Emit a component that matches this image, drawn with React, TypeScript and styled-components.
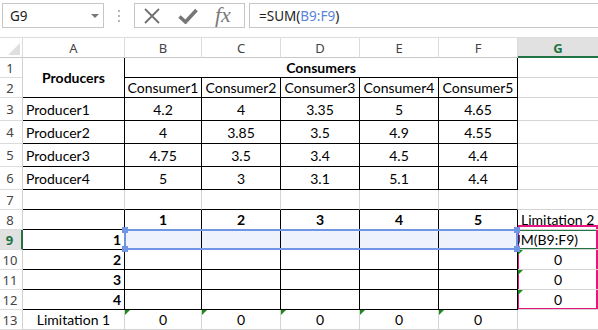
import React from "react";
import styled, { createGlobalStyle, css } from "styled-components";

const GRID = "#d4d4d4";
const DARK = "#000";
const GREEN = "#217346";

const GlobalStyle = createGlobalStyle`
  html, body {
    margin: 0;
    padding: 0;
    background: #fff;
    overflow: hidden;
  }
  body {
    font-family: Lato, "Liberation Sans", sans-serif;
  }
`;

const Page = styled.div`
  width: 598px;
  height: 330px;
  overflow: hidden;
`;

/* ---------- formula bar ---------- */

const FormulaBar = styled.div`
  display: flex;
  align-items: flex-start;
  height: 37px;
  padding-top: 3px;
  box-sizing: border-box;
  font-family: "Noto Sans", "Liberation Sans", sans-serif;
  font-size: 13.5px;
  color: #222;
`;

const NameBox = styled.div`
  display: flex;
  align-items: center;
  justify-content: space-between;
  margin-left: 2px;
  width: 102px;
  height: 25px;
  box-sizing: border-box;
  border: 1px solid #c6c6c6;
  padding: 0 4px 0 7px;
`;

const Caret = styled.span`
  width: 0;
  height: 0;
  border-left: 4px solid transparent;
  border-right: 4px solid transparent;
  border-top: 4px solid #777;
`;

const Grip = styled.div`
  display: flex;
  flex-direction: column;
  align-items: center;
  justify-content: center;
  gap: 3px;
  width: 30px;
  height: 25px;

  span {
    width: 2px;
    height: 2px;
    background: #b5b5b5;
  }
`;

const FnBox = styled.div`
  display: flex;
  align-items: center;
  width: 111px;
  height: 25px;
  box-sizing: border-box;
  border: 1px solid #c6c6c6;
  padding-left: 8px;
  gap: 17px;
`;

const FxLabel = styled.span`
  font-family: "Liberation Serif", serif;
  font-style: italic;
  font-size: 22px;
  color: #7a7a7a;
  line-height: 1;
  margin-top: -2px;
`;

const FormulaInput = styled.div`
  display: flex;
  align-items: center;
  margin-left: 4px;
  flex: 1;
  height: 25px;
  box-sizing: border-box;
  border: 1px solid #c6c6c6;
  border-right: none;
  padding-left: 9px;
`;

const Ref = styled.span`
  color: #5b83d8;
`;

/* ---------- sheet ---------- */

const Sheet = styled.div`
  display: grid;
  grid-template-columns: 23px 102px 77px 79px 79px 79px 79px 81px;
  grid-template-rows: 21px 20px 20px 23px 23px 23px 23px 20px 20px 20px 20px 20px 20px 20px;
  font-size: 14px;
  color: #000;
`;

type Place = { $row: number; $col: number; $span?: number; $rows?: number };

const place = css<Place>`
  grid-row: ${(p) => p.$row} / span ${(p) => p.$rows ?? 1};
  grid-column: ${(p) => p.$col} / span ${(p) => p.$span ?? 1};
`;

const Corner = styled.div`
  grid-row: 1;
  grid-column: 1;
  box-sizing: border-box;
  border-top: 1px solid #dcdcdc;
  border-right: 1px solid #dcdcdc;
  border-bottom: 1px solid #c8c8c8;
  position: relative;

  &::after {
    content: "";
    position: absolute;
    right: 2px;
    bottom: 2px;
    border-left: 12px solid transparent;
    border-bottom: 12px solid #dfdfdf;
  }
`;

const ColHead = styled.div<Place & { $active?: boolean }>`
  ${place};
  display: flex;
  align-items: center;
  justify-content: center;
  box-sizing: border-box;
  border-top: 1px solid #dcdcdc;
  border-right: 1px solid #dcdcdc;
  border-bottom: 1px solid #c8c8c8;
  font-family: "Noto Sans", "Liberation Sans", sans-serif;
  font-size: 13px;
  color: #444;
  ${(p) =>
    p.$active &&
    css`
      background: #e1e1e1;
      color: ${GREEN};
      font-weight: 700;
      border-bottom: 2px solid ${GREEN};
      padding-top: 1px;
    `}
`;

const RowHead = styled.div<Place & { $active?: boolean }>`
  ${place};
  display: flex;
  align-items: center;
  justify-content: center;
  box-sizing: border-box;
  border-right: 1px solid #d0d0d0;
  border-bottom: 1px solid #dcdcdc;
  font-family: "Noto Sans", "Liberation Sans", sans-serif;
  font-size: 13px;
  color: #444;
  padding-right: 2px;
  ${(p) =>
    p.$active &&
    css`
      background: #e1e1e1;
      color: ${GREEN};
      font-weight: 700;
      border-right: 2px solid ${GREEN};
    `}
`;

type CellProps = Place & {
  $dr?: boolean;
  $db?: boolean;
  $align?: "left" | "center" | "right";
  $bold?: boolean;
  $fill?: string;
  $flag?: boolean;
};

const Cell = styled.div<CellProps>`
  ${place};
  position: relative;
  display: flex;
  align-items: center;
  justify-content: ${(p) =>
    p.$align === "left" ? "flex-start" : p.$align === "right" ? "flex-end" : "center"};
  box-sizing: border-box;
  padding: 0 3px;
  border-right: 1px solid ${(p) => (p.$dr ? DARK : GRID)};
  border-bottom: 1px solid ${(p) => (p.$db ? DARK : GRID)};
  background: ${(p) => p.$fill ?? "transparent"};
  font-weight: ${(p) => (p.$bold ? 700 : 400)};
  white-space: nowrap;
  overflow: hidden;

  ${(p) =>
    p.$flag &&
    css`
      &::before {
        content: "";
        position: absolute;
        left: 0;
        top: 0;
        border-top: 5px solid #1e8a1e;
        border-right: 5px solid transparent;
      }
    `}
`;

const EditText = styled.span`
  margin-right: 17px;
  flex-shrink: 0;
`;

/* overlays lying over the cells */

const RangeBox = styled.div<Place>`
  ${place};
  position: relative;
  margin: -1px 0 0 -1px;
  border: 2px solid #6f95e4;
  pointer-events: none;
`;

const Handle = styled.span<{ $x: "l" | "r"; $y: "t" | "b" }>`
  position: absolute;
  width: 6px;
  height: 6px;
  background: #6f95e4;
  ${(p) => (p.$x === "l" ? "left: -4px;" : "right: -4px;")}
  ${(p) => (p.$y === "t" ? "top: -4px;" : "bottom: -4px;")}
`;

const ActiveBox = styled.div<Place>`
  ${place};
  margin: -1px -1px 0 0;
  border-top: 2px solid ${GREEN};
  border-bottom: 2px solid ${GREEN};
  pointer-events: none;
`;

const PinkBox = styled.div<Place>`
  ${place};
  margin: -5px 1px 0 -1px;
  border: 2px solid #e5177f;
  pointer-events: none;
`;

const cols = ["A", "B", "C", "D", "E", "F", "G"];

const values = [
  ["Producer1", "4.2", "4", "3.35", "5", "4.65"],
  ["Producer2", "4", "3.85", "3.5", "4.9", "4.55"],
  ["Producer3", "4.75", "3.5", "3.4", "4.5", "4.4"],
  ["Producer4", "5", "3", "3.1", "5.1", "4.4"],
];

function XIcon() {
  return (
    <svg width="18" height="16" viewBox="0 0 18 16">
      <path d="M2 1 L16 15 M16 1 L2 15" stroke="#707070" strokeWidth="1.8" fill="none" />
    </svg>
  );
}

function CheckIcon() {
  return (
    <svg width="20" height="16" viewBox="0 0 20 16">
      <path d="M1.5 8.5 L7.5 14 L18.5 2" stroke="#767676" strokeWidth="3.6" fill="none" />
    </svg>
  );
}

export default function App() {
  // sheet grid row = excel row + 1 (header occupies first)
  const r = (n: number) => n + 1;
  const c = (i: number) => i + 2; // A -> 2

  const cells: React.ReactNode[] = [];

  // rows 1-2: table header
  cells.push(
    <Cell key="A1" $row={r(1)} $col={c(0)} $rows={2} $dr $db $bold>
      Producers
    </Cell>,
    <Cell key="B1" $row={r(1)} $col={c(1)} $span={5} $dr $db $bold>
      Consumers
    </Cell>,
    <Cell key="G1" $row={r(1)} $col={c(6)} />
  );
  for (let i = 1; i <= 5; i++) {
    cells.push(
      <Cell key={`C2${i}`} $row={r(2)} $col={c(i)} $dr $db>
        Consumer{i}
      </Cell>
    );
  }
  cells.push(<Cell key="G2" $row={r(2)} $col={c(6)} />);

  // rows 3-6: costs
  values.forEach((vals, k) => {
    vals.forEach((v, i) => (
      cells.push(
        <Cell key={`v${k}${i}`} $row={r(3 + k)} $col={c(i)} $dr $db $align={i === 0 ? "left" : "center"}>
          {v}
        </Cell>
      )
    ));
    cells.push(<Cell key={`vg${k}`} $row={r(3 + k)} $col={c(6)} />);
  });

  // row 7: empty, dark bottom edge of next table
  for (let i = 0; i < 7; i++) {
    cells.push(<Cell key={`e7${i}`} $row={r(7)} $col={c(i)} $db={i < 6} />);
  }

  // row 8: column numbers
  cells.push(<Cell key="A8" $row={r(8)} $col={c(0)} $dr $db />);
  for (let i = 1; i <= 5; i++) {
    cells.push(
      <Cell key={`n8${i}`} $row={r(8)} $col={c(i)} $dr $db $bold>
        {i}
      </Cell>
    );
  }
  cells.push(
    <Cell key="G8" $row={r(8)} $col={c(6)} $align="left">
      Limitation 2
    </Cell>
  );

  // rows 9-12: plan
  for (let k = 0; k < 4; k++) {
    const row = 9 + k;
    cells.push(
      <Cell key={`a${row}`} $row={r(row)} $col={c(0)} $dr $db $bold $align="right">
        {k + 1}
      </Cell>
    );
    for (let i = 1; i <= 5; i++) {
      cells.push(
        <Cell key={`p${row}${i}`} $row={r(row)} $col={c(i)} $dr $db $fill={row === 9 ? "#eef2fc" : undefined} />
      );
    }
    cells.push(
      row === 9 ? (
        <Cell key="G9" $row={r(row)} $col={c(6)} $align="right">
          <EditText>=SUM(B9:F9)</EditText>
        </Cell>
      ) : (
        <Cell key={`g${row}`} $row={r(row)} $col={c(6)} $flag>
          0
        </Cell>
      )
    );
  }

  // row 13: totals
  cells.push(
    <Cell key="A13" $row={r(13)} $col={c(0)}>
      Limitation 1
    </Cell>
  );
  for (let i = 1; i <= 5; i++) {
    cells.push(
      <Cell key={`t13${i}`} $row={r(13)} $col={c(i)} $flag>
        0
      </Cell>
    );
  }
  cells.push(<Cell key="G13" $row={r(13)} $col={c(6)} />);

  return (
    <Page>
      <GlobalStyle />
      <FormulaBar>
        <NameBox>
          G9
          <Caret />
        </NameBox>
        <Grip>
          <span />
          <span />
          <span />
        </Grip>
        <FnBox>
          <XIcon />
          <CheckIcon />
          <FxLabel>fx</FxLabel>
        </FnBox>
        <FormulaInput>
          =SUM(<Ref>B9:F9</Ref>)
        </FormulaInput>
      </FormulaBar>

      <Sheet>
        <Corner />
        {cols.map((name, i) => (
          <ColHead key={name} $row={1} $col={c(i)} $active={name === "G"}>
            {name}
          </ColHead>
        ))}
        {Array.from({ length: 13 }, (_, k) => (
          <RowHead key={k} $row={r(k + 1)} $col={1} $active={k + 1 === 9}>
            {k + 1}
          </RowHead>
        ))}
        {cells}
        <RangeBox $row={r(9)} $col={c(1)} $span={5}>
          <Handle $x="l" $y="t" />
          <Handle $x="l" $y="b" />
          <Handle $x="r" $y="t" />
          <Handle $x="r" $y="b" />
        </RangeBox>
        <ActiveBox $row={r(9)} $col={c(6)} />
        <PinkBox $row={r(9)} $col={c(6)} $rows={4} />
      </Sheet>
    </Page>
  );
}
